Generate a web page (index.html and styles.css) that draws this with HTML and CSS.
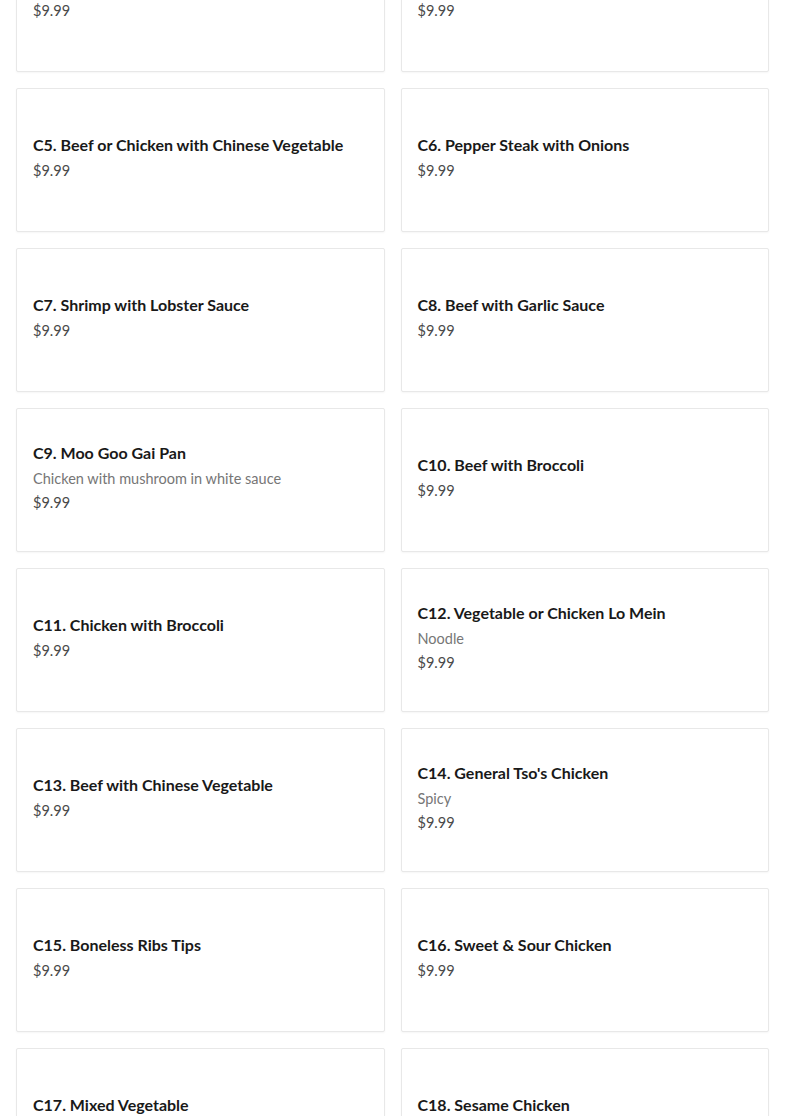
FILE: index.html
```html
<!DOCTYPE html>
<html lang="en">
<head>
    <meta charset="UTF-8">
    <meta name="viewport" content="width=device-width, initial-scale=1.0">
    <title>Chef Specials</title>
    <link rel="stylesheet" href="styles.css">
</head>
<body>
    <div class="menu">
        <div class="item">
            <h3 class="item-name">C3. Chicken with Mixed Vegetable</h3>
            <div class="item-price">$9.99</div>
        </div>
        <div class="item">
            <h3 class="item-name">C4. Shrimp with Mixed Vegetable</h3>
            <div class="item-price">$9.99</div>
        </div>
        <div class="item">
            <h3 class="item-name">C5. Beef or Chicken with Chinese Vegetable</h3>
            <div class="item-price">$9.99</div>
        </div>
        <div class="item">
            <h3 class="item-name">C6. Pepper Steak with Onions</h3>
            <div class="item-price">$9.99</div>
        </div>
        <div class="item">
            <h3 class="item-name">C7. Shrimp with Lobster Sauce</h3>
            <div class="item-price">$9.99</div>
        </div>
        <div class="item">
            <h3 class="item-name">C8. Beef with Garlic Sauce</h3>
            <div class="item-price">$9.99</div>
        </div>
        <div class="item">
            <h3 class="item-name">C9. Moo Goo Gai Pan</h3>
            <p class="item-desc">Chicken with mushroom in white sauce</p>
            <div class="item-price">$9.99</div>
        </div>
        <div class="item">
            <h3 class="item-name">C10. Beef with Broccoli</h3>
            <div class="item-price">$9.99</div>
        </div>
        <div class="item">
            <h3 class="item-name">C11. Chicken with Broccoli</h3>
            <div class="item-price">$9.99</div>
        </div>
        <div class="item">
            <h3 class="item-name">C12. Vegetable or Chicken Lo Mein</h3>
            <p class="item-desc">Noodle</p>
            <div class="item-price">$9.99</div>
        </div>
        <div class="item">
            <h3 class="item-name">C13. Beef with Chinese Vegetable</h3>
            <div class="item-price">$9.99</div>
        </div>
        <div class="item">
            <h3 class="item-name">C14. General Tso's Chicken</h3>
            <p class="item-desc">Spicy</p>
            <div class="item-price">$9.99</div>
        </div>
        <div class="item">
            <h3 class="item-name">C15. Boneless Ribs Tips</h3>
            <div class="item-price">$9.99</div>
        </div>
        <div class="item">
            <h3 class="item-name">C16. Sweet &amp; Sour Chicken</h3>
            <div class="item-price">$9.99</div>
        </div>
        <div class="item">
            <h3 class="item-name">C17. Mixed Vegetable</h3>
            <div class="item-price">$9.99</div>
        </div>
        <div class="item">
            <h3 class="item-name">C18. Sesame Chicken</h3>
            <div class="item-price">$9.99</div>
        </div>
    </div>
</body>
</html>
```

FILE: styles.css
```css
body {
    font-family: 'Lato', 'Noto Sans', sans-serif;
    margin: 0;
    background-color: #fff;
    color: #191919;
}

/* list is scrolled a little: first row sits partly above the fold */
.menu {
    display: grid;
    grid-template-columns: 1fr 1fr;
    gap: 16px;
    padding: 0 16px;
    margin-top: -72px;
}

.item {
    height: 144px;
    box-sizing: border-box;
    display: flex;
    flex-direction: column;
    justify-content: center;
    gap: 4px;
    padding: 0 16px 6px;
    border: 1px solid #e8e8e8;
    border-radius: 2px;
    box-shadow: 0 1px 2px rgba(0, 0, 0, 0.04);
    background-color: white;
}

.item-name {
    margin: 0;
    font-size: 16px;
    line-height: 24px;
    font-weight: 700;
    color: #191919;
}

.item-desc {
    margin: 0;
    font-size: 14.5px;
    line-height: 20px;
    color: #767676;
}

.item-price {
    font-size: 14.5px;
    line-height: 20px;
    color: #494949;
}
```
